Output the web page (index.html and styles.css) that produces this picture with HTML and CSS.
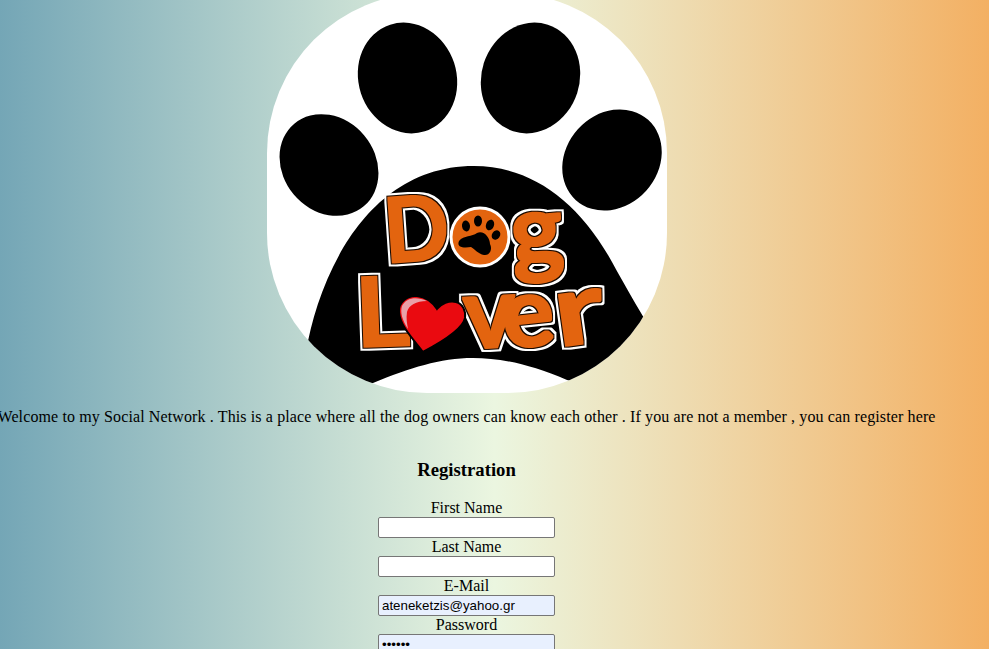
FILE: index.html
```html
<!DOCTYPE html>
<html lang="en">
<head>
<meta charset="utf-8">
<title>Dog Lover Social Network</title>
<link rel="stylesheet" href="styles.css">
</head>
<body>
<main class="page">
  <svg class="logo" viewBox="267 -7 400 400" width="400" height="400" role="img" aria-label="Dog Lover">
    <defs>
      <filter id="sticker" filterUnits="userSpaceOnUse" x="340" y="170" width="290" height="200" color-interpolation-filters="sRGB">
        <feMorphology in="SourceAlpha" operator="dilate" radius="4.2" result="o3"/>
        <feFlood flood-color="#fff"/>
        <feComposite in2="o3" operator="in" result="white"/>
        <feMorphology in="SourceAlpha" operator="dilate" radius="2.2" result="o2"/>
        <feFlood flood-color="#1a0a00"/>
        <feComposite in2="o2" operator="in" result="edge"/>
        <feMorphology in="SourceAlpha" operator="dilate" radius="1.4" result="o1"/>
        <feFlood flood-color="#e3640f"/>
        <feComposite in2="o1" operator="in" result="orange"/>
        <feMerge>
          <feMergeNode in="white"/>
          <feMergeNode in="edge"/>
          <feMergeNode in="orange"/>
        </feMerge>
      </filter>
    </defs>
    <rect class="logo-bg" x="267" y="-7" width="400" height="400"/>
    <ellipse cx="407.5" cy="78" rx="49" ry="56" transform="rotate(-18 407.5 78)"/>
    <ellipse cx="530.5" cy="78" rx="49" ry="56" transform="rotate(18 530.5 78)"/>
    <ellipse cx="329" cy="165" rx="46" ry="54" transform="rotate(-40 329 165)"/>
    <ellipse cx="612" cy="160" rx="46" ry="54" transform="rotate(42 612 160)"/>
    <path d="M474 166C530 166 578 200 612 262C625 286 645 320 660 345L650 400L567 380C530 364 500 358 473 358C440 358 410 368 373 383L290 400L306 352C318 280 365 166 474 166Z"/>

    <g class="sticker">
      <text class="letter l-d" transform="translate(386 263) rotate(-4) scale(.95 1)">D</text>
      <text class="letter l-g" transform="translate(513 267) rotate(-5)">g</text>
      <text class="letter l-l" transform="translate(356 347) rotate(-2) scale(1.1 1)">L</text>
      <text class="letter l-v" transform="translate(465 349) rotate(-3)">v</text>
      <text class="letter l-e" transform="translate(505 349) rotate(-6)">e</text>
      <text class="letter l-r" transform="translate(558 347) rotate(-8) scale(1.35 1)">r</text>
    </g>
    <circle class="o-ring" cx="480" cy="237" r="29"/>
    <g class="o-paw">
      <ellipse cx="466" cy="226" rx="4" ry="5.5" transform="rotate(-10 466 226)"/>
      <ellipse cx="478" cy="221" rx="4" ry="5.5"/>
      <ellipse cx="490" cy="225" rx="4" ry="5.5" transform="rotate(20 490 225)"/>
      <ellipse cx="496" cy="235" rx="4" ry="5" transform="rotate(35 496 235)"/>
      <path d="M459 241C464 235 472 237 477 233C484 230 490 238 490 244C493 250 489 256 484 255C478 254 475 249 471 247C465 248 456 248 459 241Z"/>
    </g>

    <path class="heart" d="M423 352C413 339 400 326 399 312C398 302 408 295 417 296C426 297 433 303 437 309C441 304 449 300 456 302C463 304 466 311 465 318C463 330 440 343 423 352Z"/>
    <path class="heart-shine" d="M408 329C402 320 400 312 402 306C406 298 416 296 427 301C416 301 409 305 407 312C406 318 407 324 408 329Z"/>
  </svg>

  <p class="welcome">Welcome to my Social Network . This is a place where all the dog owners can know each other . If you are not a member , you can register here</p>

  <h3 class="title">Registration</h3>

  <form class="form">
    <label class="field-label" for="first">First Name</label>
    <input class="field" id="first" type="text">
    <label class="field-label" for="last">Last Name</label>
    <input class="field" id="last" type="text">
    <label class="field-label" for="email">E-Mail</label>
    <input class="field filled" id="email" type="email" value="ateneketzis@yahoo.gr">
    <label class="field-label" for="pass">Password</label>
    <input class="field filled" id="pass" type="password" value="secret">
  </form>
</main>
</body>
</html>
```

FILE: styles.css
```css
html {
  overflow: hidden;
  height: 100%;
}

body {
  margin: 0;
  height: 100%;
  background: linear-gradient(to right, #74a6b6 0%, #ebf6e0 50%, #f3b063 100%);
  font-family: "Liberation Serif", "Times New Roman", serif;
  font-size: 16px;
  color: #000;
  overflow: hidden;
}

.page {
  width: 933px;
  margin-top: -7px;
  display: flex;
  flex-direction: column;
  align-items: center;
}

.logo {
  display: block;
  flex: none;
  border-radius: 160px;
  margin-bottom: 15px;
  margin-left: 1px;
}

.logo-bg { fill: #fff; }

.sticker { filter: url(#sticker); }

.letter {
  font-family: "Lato", "DejaVu Sans", sans-serif;
  font-weight: 700;
  fill: #e3640f;
}

.l-d { font-size: 90px; }
.l-g { font-size: 100px; }
.l-l { font-size: 96px; }
.l-v { font-size: 100px; }
.l-e { font-size: 98px; }
.l-r { font-size: 100px; }

.o-ring {
  fill: #e3640f;
  stroke: #fff;
  stroke-width: 3px;
}

.o-paw { fill: #000; }

.heart {
  fill: #ea0a10;
  stroke: #000;
  stroke-width: 2px;
}

.heart-shine { fill: #e9a0a8; }

.welcome {
  margin: 0;
  white-space: nowrap;
  line-height: 18px;
  letter-spacing: 0.12px;
  flex: none;
}

.title {
  margin: 33px 0 19px;
  font-size: 18.72px;
  line-height: 21px;
  font-weight: bold;
}

.form {
  display: flex;
  flex-direction: column;
  align-items: center;
}

.field-label {
  line-height: 18px;
}

.field {
  box-sizing: border-box;
  width: 177px;
  height: 21px;
  margin: 0;
  padding: 1px 3px;
  border: 1px solid #767676;
  border-radius: 2px;
  background: #fff;
  font-family: "Liberation Sans", Arial, sans-serif;
  font-size: 13.33px;
  color: #000;
}

.filled {
  background: #e8f0fe;
}
```
